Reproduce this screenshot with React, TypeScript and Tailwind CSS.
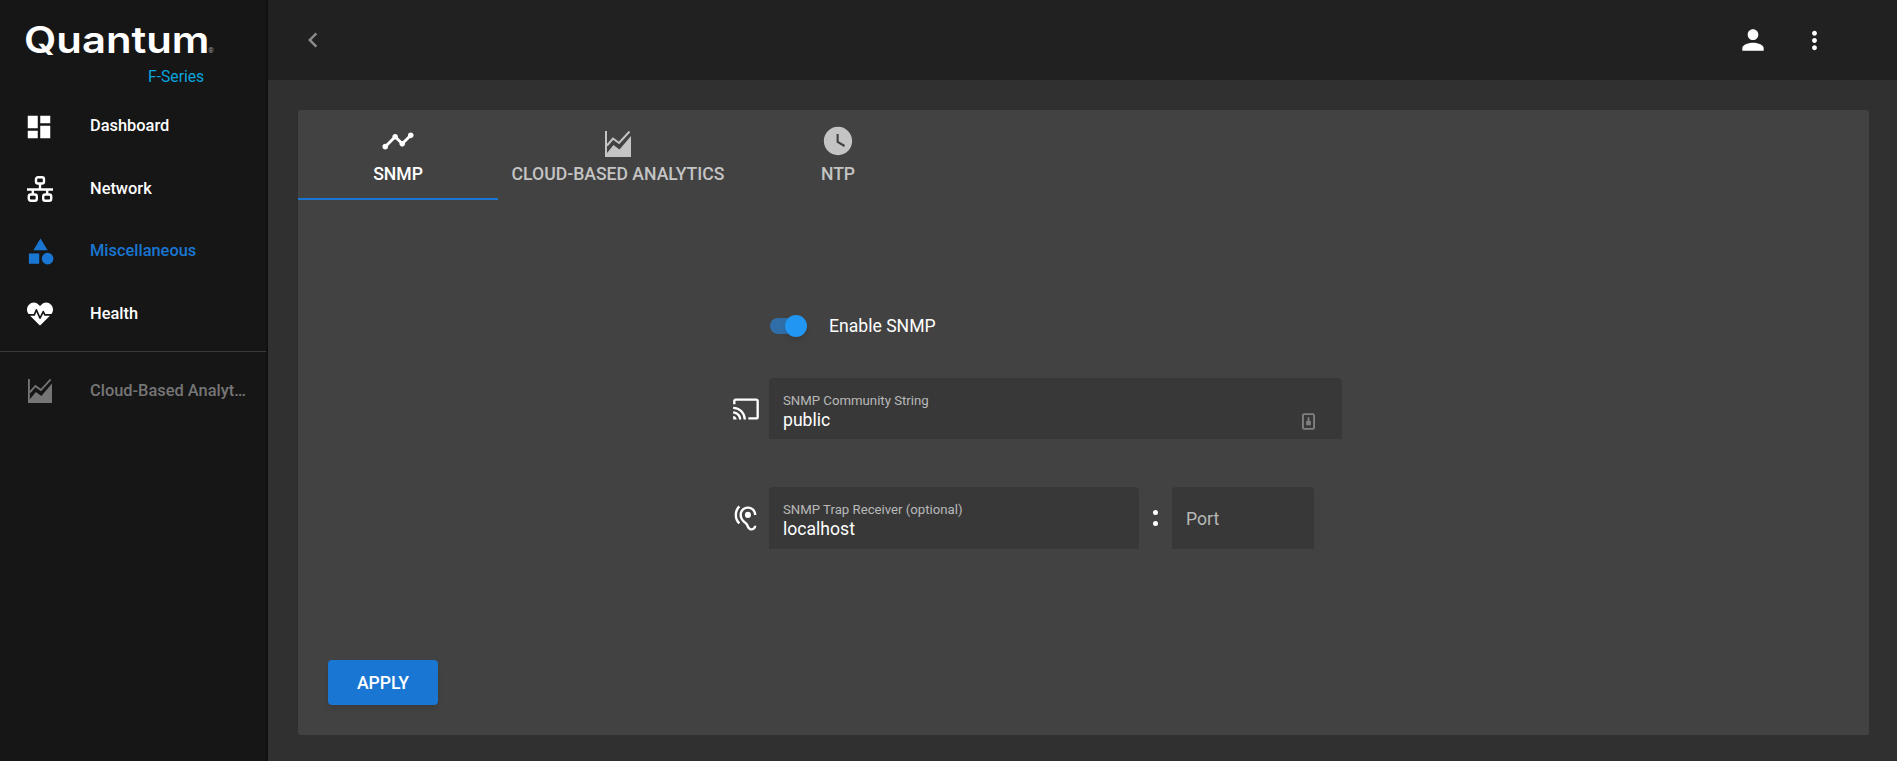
import { MdDashboard, MdCategory, MdTimeline, MdWatchLater, MdCast, MdHearing, MdPerson, MdMoreVert, MdChevronLeft } from "react-icons/md";
import { FaHeartbeat } from "react-icons/fa";

function AreaIcon({ className }: { className?: string }) {
  return (
    <svg viewBox="0 0 26 26" className={className} fill="currentColor">
      <path d="M0 0h2v22L8.5 14l6 4.5L26 5v21H0z" />
      <path d="M2 14.500 8 7.500l6 4.500L24.500 0.500" fill="none" stroke="currentColor" strokeWidth="2" />
    </svg>
  );
}

function LanIcon({ className }: { className?: string }) {
  return (
    <svg viewBox="0 0 26 26" className={className} fill="none" stroke="currentColor" strokeWidth="2.400">
      <rect x="9" y="1.200" width="8" height="6.300" rx="2" />
      <rect x="1.800" y="18.500" width="8" height="6.300" rx="2" />
      <rect x="16.200" y="18.500" width="8" height="6.300" rx="2" />
      <path d="M13 7.500v6M0 13.500h26M5.800 13.500v5M20.200 13.500v5" />
    </svg>
  );
}

function NavItem({ icon, label, tone }: { icon: React.ReactNode; label: string; tone: string }) {
  return (
    <div className={`flex h-[62.5px] items-center ${tone}`}>
      <div className="flex w-[90px] shrink-0 justify-start pl-[27px]">{icon}</div>
      <span className="truncate pr-[20px] text-[16.4px] font-medium">{label}</span>
    </div>
  );
}

function Tab({ icon, label, width, active, iconClass }: { icon: React.ReactNode; label: string; width: string; active?: boolean; iconClass?: string }) {
  return (
    <div className={`flex h-[90px] flex-col items-center border-b-2 ${width} ${active ? "border-[#1976d2] text-white" : "border-transparent text-[#c4c4c4]"}`}>
      <div className={`mt-[14px] flex h-[34px] items-center ${iconClass ?? ""}`}>{icon}</div>
      <span className="mt-[6px] text-[17.6px] font-medium uppercase leading-5">{label}</span>
    </div>
  );
}

export default function App() {
  return (
    <div className="flex h-[761px] w-[1897px] overflow-hidden bg-[#303030] [font-family:Roboto,sans-serif] text-white">
      <aside className="w-[268px] shrink-0 border-r-2 border-[#111] bg-[#161616]">
        <div className="h-[95.5px]">
          <div className="flex items-end pl-[24px] pt-[17px]">
            <span className="origin-left scale-x-[1.13] [font-family:Inter,sans-serif] text-[37px] font-semibold leading-[46px] text-white">Quantum</span>
            <span className="mb-[8px] ml-[20px] text-[7px] leading-none text-[#999]">®</span>
          </div>
          <div className="pl-[148px] pt-[4px] text-[15.7px] leading-5 text-[#0aa5de]">F-Series</div>
        </div>
        <NavItem icon={<MdDashboard className="-ml-[3px] h-[30px] w-[30px]" />} label="Dashboard" tone="text-white" />
        <NavItem icon={<LanIcon className="h-[26px] w-[26px]" />} label="Network" tone="text-white" />
        <NavItem icon={<MdCategory className="-ml-[2px] h-[31px] w-[31px]" />} label="Miscellaneous" tone="text-[#1976d2]" />
        <NavItem icon={<FaHeartbeat className="h-[26px] w-[26px]" />} label="Health" tone="text-white" />
        <div className="mt-[5.5px] h-px bg-[#3a3a3a]" />
        <div className="pt-[8px]">
          <NavItem icon={<AreaIcon className="h-[24px] w-[26px]" />} label="Cloud-Based Analytics" tone="text-[#757575]" />
        </div>
      </aside>

      <div className="flex min-w-0 flex-1 flex-col">
        <header className="flex h-[80px] shrink-0 items-center bg-[#212121] pl-[30px]">
          <MdChevronLeft className="h-[30px] w-[30px] text-[#8a8a8a]" />
          <MdPerson className="ml-auto h-[32px] w-[32px]" />
          <MdMoreVert className="ml-[31px] mr-[68px] h-[29px] w-[29px]" />
        </header>
        <main className="flex-1 pb-[26px] pl-[30px] pr-[28px] pt-[30px]">
          <div className="flex h-[625px] flex-col rounded-[2px] bg-[#424242]">
            <div className="flex">
              <Tab active width="w-[200px]" label="SNMP" icon={<MdTimeline className="h-[34px] w-[34px]" />} />
              <Tab width="w-[240px]" label="Cloud-Based Analytics" iconClass="translate-y-[3px]" icon={<AreaIcon className="h-[26px] w-[26px]" />} />
              <Tab width="w-[200px]" label="NTP" icon={<MdWatchLater className="h-[34px] w-[34px]" />} />
            </div>

            <div className="ml-[435px] flex flex-1 flex-col">
              <div className="ml-[37px] mt-[114px] flex h-[24px] items-center">
                <div className="relative h-[16px] w-[34px] rounded-full bg-[#2f6ea8]">
                  <div className="absolute -right-[3px] -top-[3px] h-[22px] w-[22px] rounded-full bg-[#2196f3] shadow-md" />
                </div>
                <span className="ml-[25px] text-[17.6px]">Enable SNMP</span>
              </div>

              <div className="mt-[40px] flex items-center">
                <div className="flex w-[29px] shrink-0 justify-start"><MdCast className="-ml-[1px] h-[28px] w-[28px]" /></div>
                <div className="relative ml-[7px] h-[61px] w-[573px] rounded-t-[4px] bg-[#383838] pl-[14px] pt-[15px]">
                  <div className="text-[13.2px] leading-4 text-[#b8b8b8]">SNMP Community String</div>
                  <div className="text-[17.6px] leading-[22px]">public</div>
                  <svg viewBox="0 0 14 18" className="absolute bottom-[9px] right-[27px] h-[17px] w-[13px] text-[#808080]" fill="none">
                    <rect x="1" y="1" width="12" height="16" rx="1.5" stroke="currentColor" strokeWidth="2" />
                    <path d="M6 4.500h2v4h1.500v4.500h-5V8.500H6z" fill="currentColor" />
                  </svg>
                </div>
              </div>

              <div className="mt-[48px] flex items-center">
                <div className="flex w-[29px] shrink-0 justify-start"><MdHearing className="-ml-[2px] h-[29px] w-[29px]" /></div>
                <div className="ml-[7px] h-[62px] w-[370px] rounded-t-[4px] bg-[#383838] pl-[14px] pt-[15px]">
                  <div className="text-[13.2px] leading-4 text-[#b8b8b8]">SNMP Trap Receiver (optional)</div>
                  <div className="text-[17.6px] leading-[22px]">localhost</div>
                </div>
                <div className="flex w-[33px] flex-col items-center gap-[6px]">
                  <span className="h-[5px] w-[5px] rounded-full bg-white" />
                  <span className="h-[5px] w-[5px] rounded-full bg-white" />
                </div>
                <div className="flex h-[62px] w-[142px] items-center rounded-t-[4px] bg-[#383838] pl-[14px] pt-[2px] text-[17.6px] text-[#b8b8b8]">Port</div>
              </div>
            </div>

            <div className="pb-[30px] pl-[30px]">
              <button className="h-[45px] w-[110px] rounded-[4px] bg-[#1976d2] pt-px text-[17.6px] font-medium uppercase shadow-md">Apply</button>
            </div>
          </div>
        </main>
      </div>
    </div>
  );
}
